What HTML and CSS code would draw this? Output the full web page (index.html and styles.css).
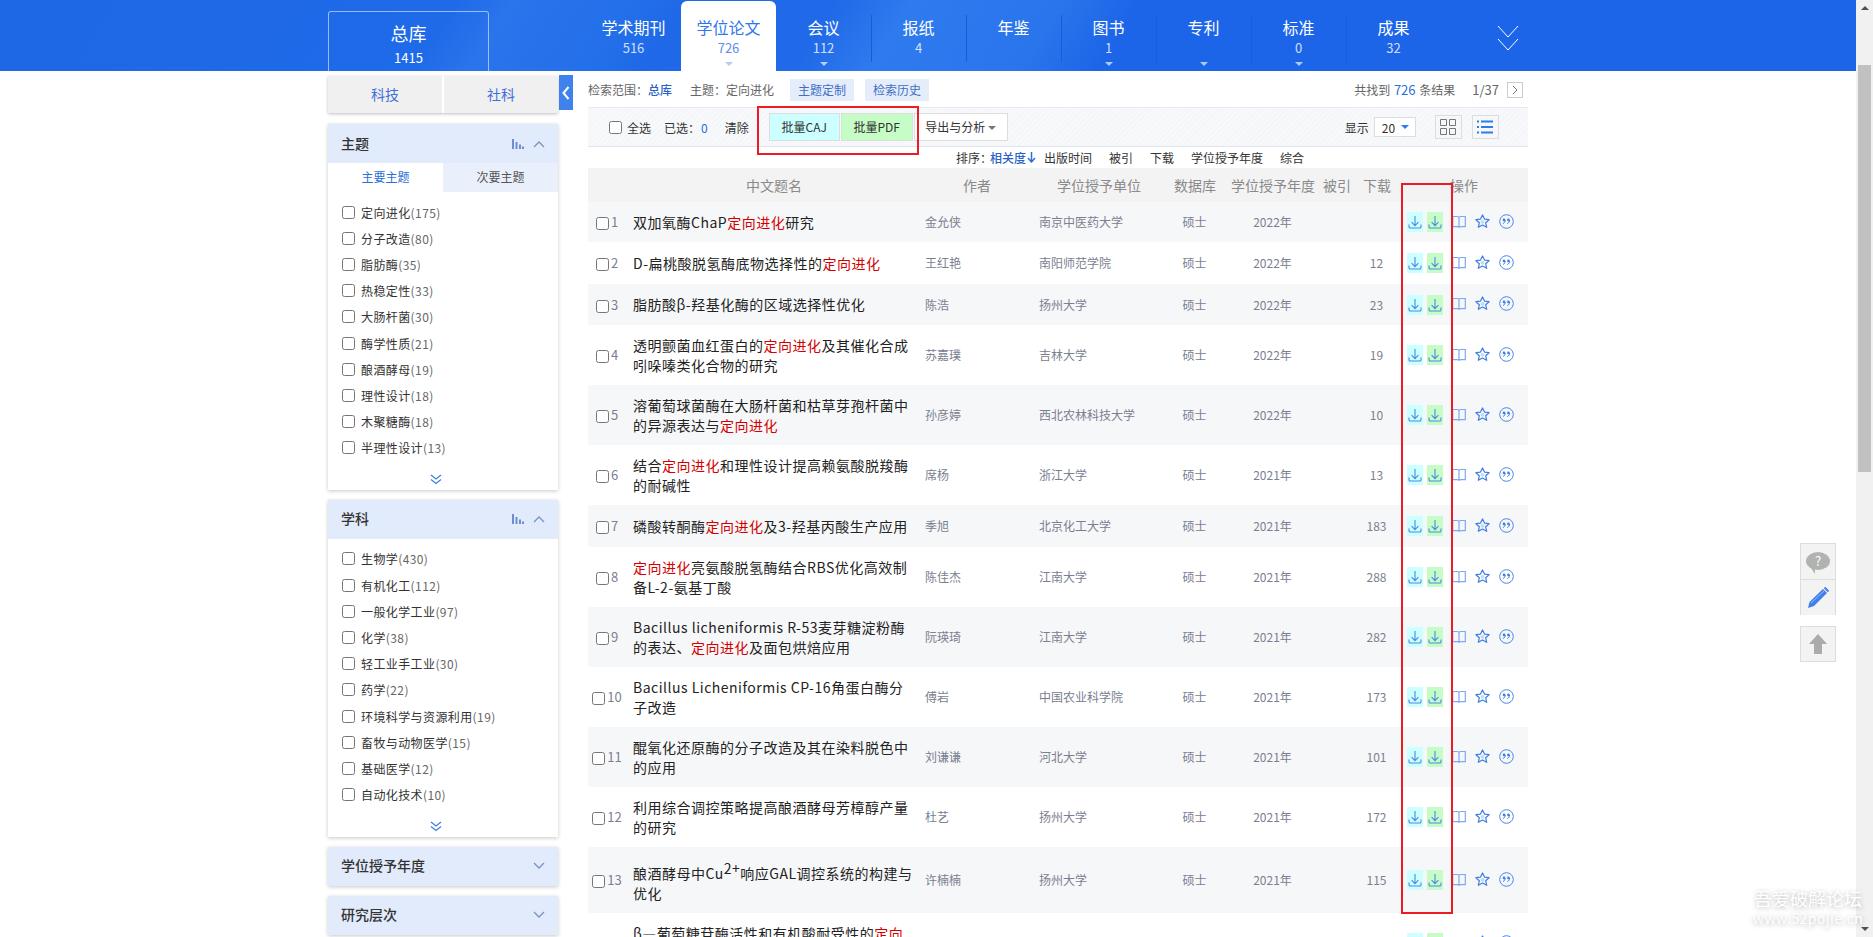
FILE: index.html
```html
<!DOCTYPE html>
<html lang="zh-CN">
<head>
    <meta charset="UTF-8">
    <title>定向进化 - 学位论文检索</title>
    <link rel="stylesheet" href="styles.css">
</head>
<body>
<svg class="defs" width="0" height="0">
    <symbol id="i-down" viewBox="0 0 16 20"><path d="M8 4v9.5M4.6 10.2L8 13.6l3.4-3.4M2 12.5v2.2c0 .8.5 1.3 1.3 1.3h9.4c.8 0 1.3-.5 1.3-1.3v-2.2" fill="none" stroke="#4a8ae6" stroke-width="1.1"/></symbol>
    <symbol id="i-book" viewBox="0 0 14 14"><path d="M.7 1.5h4.6c.9 0 1.7.5 1.7 1.3v10c0-.7-.8-1.1-1.7-1.1H.7zM13.3 1.5H8.7C7.8 1.5 7 2 7 2.8v10c0-.7.8-1.1 1.7-1.1h4.6z" fill="none" stroke="#7ea8ee" stroke-width="1.2"/></symbol>
    <symbol id="i-star" viewBox="0 0 15 15"><path d="M7.5 1l2 4.100 4.600.6-3.400 3.100 1 4.500-4.200-2.300-4.200 2.300 1-4.500L.9 5.700l4.600-.6z" fill="none" stroke="#3f7fe0" stroke-width="1.200" stroke-linejoin="round"/><circle cx="7.500" cy="7.800" r="1.900" fill="#c4d8f6"/></symbol>
    <symbol id="i-quote" viewBox="0 0 15 15"><circle cx="7.500" cy="7.500" r="6.800" fill="none" stroke="#4a86e6" stroke-width="1"/><circle cx="5" cy="5.900" r="1.300" fill="#3f7fe0"/><circle cx="9.400" cy="5.900" r="1.300" fill="#3f7fe0"/><path d="M6.200 6c0 1.700-.9 3-2.300 3.600M10.600 6c0 1.700-.9 3-2.300 3.600" fill="none" stroke="#3f7fe0" stroke-width="1"/></symbol>
    <symbol id="i-bars" viewBox="0 0 12 10"><path d="M0 0h2v10H0zM3.500 3h2v7h-2zM7 5.500h2V10H7zM10 7.500h2V10h-2z" fill="#6f8fcc"/></symbol>
    <symbol id="i-up" viewBox="0 0 12 8"><path d="M1 7l5-5 5 5" fill="none" stroke="#7b93bd" stroke-width="1.300"/></symbol>
    <symbol id="i-dn" viewBox="0 0 12 8"><path d="M1 1l5 5 5-5" fill="none" stroke="#7b93bd" stroke-width="1.300"/></symbol>
    <symbol id="i-more" viewBox="0 0 12 11"><path d="M1 1l5 4 5-4M1 5.500l5 4 5-4" fill="none" stroke="#3f7fe0" stroke-width="1.300"/></symbol>
</svg>

<div class="app">
    <div class="page">
        <!-- top database tabs -->
        <div class="topbar">
            <div class="topbar-inner">
                <div class="lib">
                    <div class="lib-name">总库</div>
                    <div class="lib-count">1415</div>
                </div>
                <div class="tabs">
                    <div class="tab"><div class="tab-name">学术期刊</div><div class="tab-count">516</div></div>
                    <div class="tab active"><div class="tab-name">学位论文</div><div class="tab-count">726</div><i class="tri"></i></div>
                    <div class="tab"><div class="tab-name">会议</div><div class="tab-count">112</div><i class="tri"></i></div>
                    <div class="tab sep"><div class="tab-name">报纸</div><div class="tab-count">4</div></div>
                    <div class="tab sep"><div class="tab-name">年鉴</div></div>
                    <div class="tab sep"><div class="tab-name">图书</div><div class="tab-count">1</div><i class="tri"></i></div>
                    <div class="tab sep"><div class="tab-name">专利</div><i class="tri"></i></div>
                    <div class="tab sep"><div class="tab-name">标准</div><div class="tab-count">0</div><i class="tri"></i></div>
                    <div class="tab sep"><div class="tab-name">成果</div><div class="tab-count">32</div></div>
                </div>
                <svg class="tabs-more" width="22" height="26" viewBox="0 0 22 26"><path d="M1 1l10 11L21 1M1 14l10 11 10-11" fill="none" stroke="#fff" stroke-width="1"/></svg>
            </div>
        </div>

        <div class="shell">
            <!-- left filters -->
            <div class="sidebar">
                <div class="field-tabs">
                    <div class="field-tab">科技</div>
                    <div class="field-tab">社科</div>
                </div>

                <div class="panel">
                    <div class="panel-head">
                        <span class="panel-name">主题</span>
                        <span class="panel-icons">
                            <svg width="12" height="10"><use href="#i-bars"/></svg>
                            <svg width="12" height="8"><use href="#i-up"/></svg>
                        </span>
                    </div>
                    <div class="panel-tabs">
                        <div class="panel-tab on">主要主题</div>
                        <div class="panel-tab">次要主题</div>
                    </div>
                    <div class="facet">
                        <label><input type="checkbox">定向进化<em>(175)</em></label>
                        <label><input type="checkbox">分子改造<em>(80)</em></label>
                        <label><input type="checkbox">脂肪酶<em>(35)</em></label>
                        <label><input type="checkbox">热稳定性<em>(33)</em></label>
                        <label><input type="checkbox">大肠杆菌<em>(30)</em></label>
                        <label><input type="checkbox">酶学性质<em>(21)</em></label>
                        <label><input type="checkbox">酿酒酵母<em>(19)</em></label>
                        <label><input type="checkbox">理性设计<em>(18)</em></label>
                        <label><input type="checkbox">木聚糖酶<em>(18)</em></label>
                        <label><input type="checkbox">半理性设计<em>(13)</em></label>
                    </div>
                    <div class="facet-more"><svg width="12" height="11"><use href="#i-more"/></svg></div>
                </div>

                <div class="panel">
                    <div class="panel-head">
                        <span class="panel-name">学科</span>
                        <span class="panel-icons">
                            <svg width="12" height="10"><use href="#i-bars"/></svg>
                            <svg width="12" height="8"><use href="#i-up"/></svg>
                        </span>
                    </div>
                    <div class="facet">
                        <label><input type="checkbox">生物学<em>(430)</em></label>
                        <label><input type="checkbox">有机化工<em>(112)</em></label>
                        <label><input type="checkbox">一般化学工业<em>(97)</em></label>
                        <label><input type="checkbox">化学<em>(38)</em></label>
                        <label><input type="checkbox">轻工业手工业<em>(30)</em></label>
                        <label><input type="checkbox">药学<em>(22)</em></label>
                        <label><input type="checkbox">环境科学与资源利用<em>(19)</em></label>
                        <label><input type="checkbox">畜牧与动物医学<em>(15)</em></label>
                        <label><input type="checkbox">基础医学<em>(12)</em></label>
                        <label><input type="checkbox">自动化技术<em>(10)</em></label>
                    </div>
                    <div class="facet-more"><svg width="12" height="11"><use href="#i-more"/></svg></div>
                </div>

                <div class="panel">
                    <div class="panel-head">
                        <span class="panel-name">学位授予年度</span>
                        <span class="panel-icons"><svg width="12" height="8"><use href="#i-dn"/></svg></span>
                    </div>
                </div>
                <div class="panel">
                    <div class="panel-head">
                        <span class="panel-name">研究层次</span>
                        <span class="panel-icons"><svg width="12" height="8"><use href="#i-dn"/></svg></span>
                    </div>
                </div>
            </div>

            <div class="collapse-btn">
                <svg width="8" height="14" viewBox="0 0 8 14"><path d="M6.500 1L1.500 7l5 6" fill="none" stroke="#fff" stroke-width="2"/></svg>
            </div>

            <!-- results -->
            <div class="main">
                <div class="info-row">
                    <span class="muted">检索范围：</span><a class="scope">总库</a>
                    <span class="topic">主题：定向进化</span>
                    <a class="chip first">主题定制</a>
                    <a class="chip">检索历史</a>
                    <span class="found">共找到 <b>726</b> 条结果</span>
                    <span class="pager">1/37</span>
                    <span class="next">
                        <svg width="6" height="10" viewBox="0 0 6 10"><path d="M1 1l4 4-4 4" fill="none" stroke="#777" stroke-width="1"/></svg>
                    </span>
                </div>

                <div class="toolbar">
                    <label class="select-all"><input type="checkbox">全选</label>
                    <span class="picked">已选：<b>0</b></span>
                    <a class="clear">清除</a>
                    <div class="batch">
                        <a class="batch-btn caj">批量CAJ</a>
                        <a class="batch-btn pdf">批量PDF</a>
                        <a class="batch-btn export">导出与分析<i class="tri-dark"></i></a>
                    </div>
                    <span class="show-label">显示</span>
                    <span class="page-size">20<i class="tri-blue"></i></span>
                    <span class="view-btn first">
                        <svg width="16" height="16" viewBox="0 0 16 16"><path d="M.5.500h6v6h-6zM9.500.500h6v6h-6zM.5 9.500h6v6h-6zM9.500 9.500h6v6h-6z" fill="none" stroke="#777" stroke-width="1"/></svg>
                    </span>
                    <span class="view-btn">
                        <svg width="16" height="14" viewBox="0 0 16 14"><path d="M4 1.500h12M4 7h12M4 12.500h12M0 1.500h2M0 7h2M0 12.500h2" fill="none" stroke="#2f7be8" stroke-width="2"/></svg>
                    </span>
                </div>

                <div class="sort-row">
                    <span class="sort-label">排序：</span>
                    <a class="sort-on">相关度<svg width="9" height="11" viewBox="0 0 9 11"><path d="M4.500 0v9M1 6l3.500 4L8 6" fill="none" stroke="#2f6fd8" stroke-width="1.500"/></svg></a>
                    <a>出版时间</a>
                    <a>被引</a>
                    <a>下载</a>
                    <a>学位授予年度</a>
                    <a>综合</a>
                </div>

                <table class="results">
                    <colgroup>
                        <col class="c-no"><col class="c-title"><col class="c-author"><col class="c-unit">
                        <col class="c-db"><col class="c-year"><col class="c-cite"><col class="c-dl"><col class="c-ops">
                    </colgroup>
                    <thead>
                        <tr>
                            <th></th><th>中文题名</th><th>作者</th><th>学位授予单位</th><th>数据库</th>
                            <th>学位授予年度</th><th>被引</th><th>下载</th><th>操作</th>
                        </tr>
                    </thead>
                    <tbody>
                        <tr class="h40">
                            <td class="no"><input type="checkbox">1</td>
                            <td class="title">双加氧酶ChaP<mark>定向进化</mark>研究</td>
                            <td>金允侠</td><td>南京中医药大学</td><td class="mid">硕士</td><td class="mid">2022年</td><td></td><td class="mid"></td>
                            <td><div class="ops"><a class="dl caj"><svg width="16" height="20"><use href="#i-down"/></svg></a><a class="dl pdf"><svg width="16" height="20"><use href="#i-down"/></svg></a><svg class="op-book" width="14" height="14"><use href="#i-book"/></svg><svg class="op" width="15" height="15"><use href="#i-star"/></svg><svg class="op" width="15" height="15"><use href="#i-quote"/></svg></div></td>
                        </tr>
                        <tr class="h42">
                            <td class="no"><input type="checkbox">2</td>
                            <td class="title">D-扁桃酸脱氢酶底物选择性的<mark>定向进化</mark></td>
                            <td>王红艳</td><td>南阳师范学院</td><td class="mid">硕士</td><td class="mid">2022年</td><td></td><td class="mid">12</td>
                            <td><div class="ops"><a class="dl caj"><svg width="16" height="20"><use href="#i-down"/></svg></a><a class="dl pdf"><svg width="16" height="20"><use href="#i-down"/></svg></a><svg class="op-book" width="14" height="14"><use href="#i-book"/></svg><svg class="op" width="15" height="15"><use href="#i-star"/></svg><svg class="op" width="15" height="15"><use href="#i-quote"/></svg></div></td>
                        </tr>
                        <tr class="h41">
                            <td class="no"><input type="checkbox">3</td>
                            <td class="title">脂肪酸β-羟基化酶的区域选择性优化</td>
                            <td>陈浩</td><td>扬州大学</td><td class="mid">硕士</td><td class="mid">2022年</td><td></td><td class="mid">23</td>
                            <td><div class="ops"><a class="dl caj"><svg width="16" height="20"><use href="#i-down"/></svg></a><a class="dl pdf"><svg width="16" height="20"><use href="#i-down"/></svg></a><svg class="op-book" width="14" height="14"><use href="#i-book"/></svg><svg class="op" width="15" height="15"><use href="#i-star"/></svg><svg class="op" width="15" height="15"><use href="#i-quote"/></svg></div></td>
                        </tr>
                        <tr class="h60">
                            <td class="no"><input type="checkbox">4</td>
                            <td class="title">透明颤菌血红蛋白的<mark>定向进化</mark>及其催化合成吲哚嗪类化合物的研究</td>
                            <td>苏嘉璞</td><td>吉林大学</td><td class="mid">硕士</td><td class="mid">2022年</td><td></td><td class="mid">19</td>
                            <td><div class="ops"><a class="dl caj"><svg width="16" height="20"><use href="#i-down"/></svg></a><a class="dl pdf"><svg width="16" height="20"><use href="#i-down"/></svg></a><svg class="op-book" width="14" height="14"><use href="#i-book"/></svg><svg class="op" width="15" height="15"><use href="#i-star"/></svg><svg class="op" width="15" height="15"><use href="#i-quote"/></svg></div></td>
                        </tr>
                        <tr class="h60">
                            <td class="no"><input type="checkbox">5</td>
                            <td class="title">溶葡萄球菌酶在大肠杆菌和枯草芽孢杆菌中的异源表达与<mark>定向进化</mark></td>
                            <td>孙彦婷</td><td>西北农林科技大学</td><td class="mid">硕士</td><td class="mid">2022年</td><td></td><td class="mid">10</td>
                            <td><div class="ops"><a class="dl caj"><svg width="16" height="20"><use href="#i-down"/></svg></a><a class="dl pdf"><svg width="16" height="20"><use href="#i-down"/></svg></a><svg class="op-book" width="14" height="14"><use href="#i-book"/></svg><svg class="op" width="15" height="15"><use href="#i-star"/></svg><svg class="op" width="15" height="15"><use href="#i-quote"/></svg></div></td>
                        </tr>
                        <tr class="h60">
                            <td class="no"><input type="checkbox">6</td>
                            <td class="title">结合<mark>定向进化</mark>和理性设计提高赖氨酸脱羧酶的耐碱性</td>
                            <td>席杨</td><td>浙江大学</td><td class="mid">硕士</td><td class="mid">2021年</td><td></td><td class="mid">13</td>
                            <td><div class="ops"><a class="dl caj"><svg width="16" height="20"><use href="#i-down"/></svg></a><a class="dl pdf"><svg width="16" height="20"><use href="#i-down"/></svg></a><svg class="op-book" width="14" height="14"><use href="#i-book"/></svg><svg class="op" width="15" height="15"><use href="#i-star"/></svg><svg class="op" width="15" height="15"><use href="#i-quote"/></svg></div></td>
                        </tr>
                        <tr class="h42">
                            <td class="no"><input type="checkbox">7</td>
                            <td class="title">磷酸转酮酶<mark>定向进化</mark>及3-羟基丙酸生产应用</td>
                            <td>季旭</td><td>北京化工大学</td><td class="mid">硕士</td><td class="mid">2021年</td><td></td><td class="mid">183</td>
                            <td><div class="ops"><a class="dl caj"><svg width="16" height="20"><use href="#i-down"/></svg></a><a class="dl pdf"><svg width="16" height="20"><use href="#i-down"/></svg></a><svg class="op-book" width="14" height="14"><use href="#i-book"/></svg><svg class="op" width="15" height="15"><use href="#i-star"/></svg><svg class="op" width="15" height="15"><use href="#i-quote"/></svg></div></td>
                        </tr>
                        <tr class="h60">
                            <td class="no"><input type="checkbox">8</td>
                            <td class="title"><mark>定向进化</mark>亮氨酸脱氢酶结合RBS优化高效制备L-2-氨基丁酸</td>
                            <td>陈佳杰</td><td>江南大学</td><td class="mid">硕士</td><td class="mid">2021年</td><td></td><td class="mid">288</td>
                            <td><div class="ops"><a class="dl caj"><svg width="16" height="20"><use href="#i-down"/></svg></a><a class="dl pdf"><svg width="16" height="20"><use href="#i-down"/></svg></a><svg class="op-book" width="14" height="14"><use href="#i-book"/></svg><svg class="op" width="15" height="15"><use href="#i-star"/></svg><svg class="op" width="15" height="15"><use href="#i-quote"/></svg></div></td>
                        </tr>
                        <tr class="h60">
                            <td class="no"><input type="checkbox">9</td>
                            <td class="title">Bacillus licheniformis R-53麦芽糖淀粉酶的表达、<mark>定向进化</mark>及面包烘焙应用</td>
                            <td>阮瑛琦</td><td>江南大学</td><td class="mid">硕士</td><td class="mid">2021年</td><td></td><td class="mid">282</td>
                            <td><div class="ops"><a class="dl caj"><svg width="16" height="20"><use href="#i-down"/></svg></a><a class="dl pdf"><svg width="16" height="20"><use href="#i-down"/></svg></a><svg class="op-book" width="14" height="14"><use href="#i-book"/></svg><svg class="op" width="15" height="15"><use href="#i-star"/></svg><svg class="op" width="15" height="15"><use href="#i-quote"/></svg></div></td>
                        </tr>
                        <tr class="h60">
                            <td class="no"><input type="checkbox">10</td>
                            <td class="title">Bacillus Licheniformis CP-16角蛋白酶分子改造</td>
                            <td>傅岩</td><td>中国农业科学院</td><td class="mid">硕士</td><td class="mid">2021年</td><td></td><td class="mid">173</td>
                            <td><div class="ops"><a class="dl caj"><svg width="16" height="20"><use href="#i-down"/></svg></a><a class="dl pdf"><svg width="16" height="20"><use href="#i-down"/></svg></a><svg class="op-book" width="14" height="14"><use href="#i-book"/></svg><svg class="op" width="15" height="15"><use href="#i-star"/></svg><svg class="op" width="15" height="15"><use href="#i-quote"/></svg></div></td>
                        </tr>
                        <tr class="h60">
                            <td class="no"><input type="checkbox">11</td>
                            <td class="title">醌氧化还原酶的分子改造及其在染料脱色中的应用</td>
                            <td>刘谦谦</td><td>河北大学</td><td class="mid">硕士</td><td class="mid">2021年</td><td></td><td class="mid">101</td>
                            <td><div class="ops"><a class="dl caj"><svg width="16" height="20"><use href="#i-down"/></svg></a><a class="dl pdf"><svg width="16" height="20"><use href="#i-down"/></svg></a><svg class="op-book" width="14" height="14"><use href="#i-book"/></svg><svg class="op" width="15" height="15"><use href="#i-star"/></svg><svg class="op" width="15" height="15"><use href="#i-quote"/></svg></div></td>
                        </tr>
                        <tr class="h60">
                            <td class="no"><input type="checkbox">12</td>
                            <td class="title">利用综合调控策略提高酿酒酵母芳樟醇产量的研究</td>
                            <td>杜艺</td><td>扬州大学</td><td class="mid">硕士</td><td class="mid">2021年</td><td></td><td class="mid">172</td>
                            <td><div class="ops"><a class="dl caj"><svg width="16" height="20"><use href="#i-down"/></svg></a><a class="dl pdf"><svg width="16" height="20"><use href="#i-down"/></svg></a><svg class="op-book" width="14" height="14"><use href="#i-book"/></svg><svg class="op" width="15" height="15"><use href="#i-star"/></svg><svg class="op" width="15" height="15"><use href="#i-quote"/></svg></div></td>
                        </tr>
                        <tr class="h66">
                            <td class="no"><input type="checkbox">13</td>
                            <td class="title title-sup">酿酒酵母中Cu<sup>2+</sup>响应GAL调控系统的构建与优化</td>
                            <td>许楠楠</td><td>扬州大学</td><td class="mid">硕士</td><td class="mid">2021年</td><td></td><td class="mid">115</td>
                            <td><div class="ops"><a class="dl caj"><svg width="16" height="20"><use href="#i-down"/></svg></a><a class="dl pdf"><svg width="16" height="20"><use href="#i-down"/></svg></a><svg class="op-book" width="14" height="14"><use href="#i-book"/></svg><svg class="op" width="15" height="15"><use href="#i-star"/></svg><svg class="op" width="15" height="15"><use href="#i-quote"/></svg></div></td>
                        </tr>
                        <tr class="h60">
                            <td class="no"><input type="checkbox">14</td>
                            <td class="title">β—葡萄糖苷酶活性和有机酸耐受性的<mark>定向进化</mark></td>
                            <td></td><td></td><td class="mid"></td><td class="mid"></td><td></td><td class="mid"></td>
                            <td><div class="ops"><a class="dl caj"><svg width="16" height="20"><use href="#i-down"/></svg></a><a class="dl pdf"><svg width="16" height="20"><use href="#i-down"/></svg></a><svg class="op-book" width="14" height="14"><use href="#i-book"/></svg><svg class="op" width="15" height="15"><use href="#i-star"/></svg><svg class="op" width="15" height="15"><use href="#i-quote"/></svg></div></td>
                        </tr>
                    </tbody>
                </table>
            </div>

            <!-- red marks drawn over the screenshot -->
            <div class="mark-batch"></div>
            <div class="mark-column"></div>
        </div>

        <div class="float-tools">
            <div class="tool">
                <span class="bubble">?</span>
            </div>
            <div class="tool">
                <svg width="24" height="24" viewBox="0 0 24 24"><path d="M2 22l1.500-6L17 3l4 4L8 20z" fill="#3f7fe8"/><path d="M18.500 1.500l4 4" stroke="#3f7fe8" stroke-width="2"/><path d="M5 17L18 5" stroke="#9dbdf5" stroke-width="1"/></svg>
            </div>
            <div class="tool tool-up">
                <svg width="20" height="22" viewBox="0 0 20 22"><path d="M10 1l9 10h-5v10H6V11H1z" fill="#a9aca9"/></svg>
            </div>
        </div>
    </div>

    <div class="scrollbar">
        <i class="arrow-up"></i>
        <div class="thumb"></div>
        <i class="arrow-down"></i>
    </div>

    <div class="watermark">
        <div class="wm-name">吾爱破解论坛</div>
        <div class="wm-url">www.52pojie.cn</div>
    </div>
</div>
</body>
</html>
```

FILE: styles.css
```css
* {
    box-sizing: border-box;
}

html, body {
    margin: 0;
    padding: 0;
    height: 100%;
    overflow: hidden;
}

body {
    font-family: "Noto Sans CJK SC", "Noto Sans", sans-serif;
    font-size: 12px;
    color: #333;
    background: #fff;
}

a {
    color: inherit;
    text-decoration: none;
}

input[type="checkbox"] {
    width: 13px;
    height: 13px;
    margin: 0;
    flex: none;
}

.defs {
    position: absolute;
}

.app {
    position: relative;
    display: flex;
    height: 937px;
    overflow: hidden;
}

.page {
    position: relative;
    flex: 1;
    min-width: 0;
    overflow: hidden;
}

/* top bar */
.topbar {
    height: 71px;
    background: linear-gradient(122deg, #1e68e6 0, #1f6ae8 24%, #2a74ec 27%, #2470ea 33%, #1f69e8 36%, #2069e8 44%, #2f7aee 48%, #2a75ec 56%, #1c65e8 60%, #1c65e8 100%);
}

.topbar-inner {
    position: relative;
    display: flex;
    width: 1200px;
    height: 71px;
    margin: 0 auto;
}

.lib {
    width: 161px;
    height: 60px;
    margin-top: 11px;
    border: 1px solid rgba(255, 255, 255, 0.55);
    border-bottom: 0;
    border-radius: 3px 3px 0 0;
    color: #fff;
    text-align: center;
}

.lib-name {
    margin-top: 8px;
    font-size: 18px;
    line-height: 26px;
}

.lib-count {
    margin-top: 4px;
    font-size: 13px;
    line-height: 16px;
}

.tabs {
    display: flex;
    margin-left: 97px;
}

.tab {
    position: relative;
    width: 95px;
    padding-top: 15px;
    color: #fff;
    text-align: center;
}

.tab-name {
    font-size: 16px;
    line-height: 24px;
}

.tab-count {
    margin-top: 1px;
    font-size: 13px;
    line-height: 16px;
    color: rgba(255, 255, 255, 0.8);
}

.tab.sep::before {
    content: "";
    position: absolute;
    left: 0;
    top: 15px;
    height: 47px;
    border-left: 1px solid #1a5cd6;
}

.tab.active {
    margin-top: 1px;
    padding-top: 14px;
    background: #fff;
    border-radius: 6px 6px 0 0;
    color: #2f78ea;
}

.tab.active .tab-count {
    color: #5b8fe6;
}

.tri {
    position: absolute;
    left: 50%;
    bottom: 5px;
    margin-left: -4px;
    border: 4px solid transparent;
    border-bottom: 0;
    border-top-color: rgba(255, 255, 255, 0.65);
}

.tab.active .tri {
    border-top-color: #b4cdf5;
}

.tabs-more {
    margin: 25px 0 0 56px;
}

/* page body */
.shell {
    position: relative;
    display: flex;
    align-items: flex-start;
    width: 1200px;
    margin: 0 auto;
}

.sidebar {
    width: 230px;
    flex: none;
    padding-top: 5px;
}

.field-tabs {
    display: flex;
    gap: 2px;
    height: 37px;
    margin-bottom: 11px;
    box-shadow: 0 1px 3px rgba(0, 0, 0, 0.25);
}

.field-tab {
    flex: 1;
    background: #f0f0f0;
    color: #3f6fd8;
    font-size: 14px;
    line-height: 37px;
    text-align: center;
}

.panel {
    margin-bottom: 10px;
    background: #fff;
    box-shadow: 0 1px 4px rgba(0, 0, 0, 0.22);
}

.panel-head {
    display: flex;
    align-items: center;
    justify-content: space-between;
    height: 39px;
    padding: 0 13px;
    background: #e2ebfb;
    color: #333;
    font-size: 14px;
    font-weight: 500;
}

.panel-name {
    margin-top: -2px;
}

.panel-icons {
    display: flex;
    align-items: center;
    gap: 9px;
}

.panel-tabs {
    display: flex;
    height: 29px;
    line-height: 27px;
    text-align: center;
}

.panel-tab {
    flex: 1;
    background: #eaf0fb;
    color: #555;
}

.panel-tab.on {
    background: #fff;
    color: #2a6fd8;
}

.facet {
    padding-top: 7px;
}

.facet label {
    display: flex;
    align-items: center;
    height: 26.2px;
    padding-left: 14px;
    color: #333;
    font-size: 12px;
    letter-spacing: 0.4px;
}

.facet input {
    margin-right: 6px;
}

.facet em {
    color: #666;
    font-style: normal;
}

.facet-more {
    display: flex;
    justify-content: center;
    height: 29px;
    padding-top: 13px;
    padding-right: 15px;
}

.collapse-btn {
    position: absolute;
    left: 231px;
    top: 4px;
    display: flex;
    align-items: center;
    justify-content: center;
    width: 14px;
    height: 35px;
    background: #3f82ee;
}

/* results */
.main {
    width: 940px;
    margin-left: 30px;
    padding-top: 8px;
}

.info-row {
    display: flex;
    align-items: center;
    height: 22px;
    font-size: 12px;
    line-height: 22px;
    color: #666;
}

.scope {
    color: #2a62c8;
    font-weight: 500;
}

.topic {
    margin-left: 18px;
}

.chip {
    width: 64px;
    height: 22px;
    margin-left: 11px;
    background: #e5edfb;
    color: #3f6fc5;
    text-align: center;
}

.chip.first {
    margin-left: 16px;
}

.found {
    margin-left: auto;
    word-spacing: 1px;
}

.found b {
    color: #2a6fd8;
    font-size: 13px;
    font-weight: 400;
}

.pager {
    margin-left: 17px;
    font-size: 13px;
}

.next {
    display: flex;
    align-items: center;
    justify-content: center;
    width: 16px;
    height: 16px;
    margin: 0 5px 0 8px;
    border: 1px solid #ccc;
}

.toolbar {
    display: flex;
    align-items: center;
    height: 40px;
    margin-top: 6px;
    padding-left: 21px;
    background: repeating-linear-gradient(135deg, #f7f9fb 0, #f7f9fb 2px, #f4f6f9 2px, #f4f6f9 4px);
    border-top: 1px solid #e6e9ef;
    border-bottom: 1px solid #e0e4ec;
}

.select-all {
    display: flex;
    align-items: center;
    gap: 5px;
}

.picked {
    margin-left: 13px;
}

.picked b {
    margin-left: 1px;
    color: #2a6fd8;
    font-weight: 400;
}

.clear {
    margin-left: 17px;
}

.batch {
    display: flex;
    height: 28px;
    margin-left: 20px;
}

.batch-btn {
    height: 28px;
    margin-right: 1px;
    border: 1px solid #ddd;
    line-height: 26px;
    text-align: center;
}

.batch-btn.caj {
    width: 71px;
    background: #ccffff;
}

.batch-btn.pdf {
    width: 72px;
    background: #c6fdc6;
}

.batch-btn.export {
    width: 94px;
    margin-right: 0;
    background: #fff;
}

.tri-dark {
    display: inline-block;
    margin-left: 3px;
    vertical-align: 2px;
    border: 4px solid transparent;
    border-bottom: 0;
    border-top-color: #777;
}

.show-label {
    margin-left: 337px;
}

.page-size {
    display: flex;
    align-items: center;
    justify-content: space-between;
    width: 42px;
    height: 20px;
    margin-left: 5px;
    padding: 0 6px 0 7px;
    background: #fff;
    border: 1px solid #ddd;
}

.tri-blue {
    border: 4px solid transparent;
    border-bottom: 0;
    border-top-color: #2f7be8;
}

.view-btn {
    display: flex;
    align-items: center;
    justify-content: center;
    width: 27px;
    height: 24px;
    margin-left: 10px;
    border: 1px solid #ddd;
}

.view-btn.first {
    margin-left: 19px;
}

.sort-row {
    display: flex;
    align-items: center;
    gap: 17px;
    height: 21px;
    padding-left: 368px;
    color: #333;
    font-size: 12px;
    white-space: nowrap;
}

.sort-label {
    margin-right: -17px;
    width: 34px;
}

.sort-on {
    display: flex;
    align-items: center;
    margin-right: -9px;
    color: #2a62c8;
    font-weight: 500;
}

.sort-on svg {
    margin-left: 1px;
}

.results {
    width: 940px;
    border-collapse: collapse;
    table-layout: fixed;
}

.c-no { width: 40px; }
.c-title { width: 292px; }
.c-author { width: 114px; }
.c-unit { width: 130px; }
.c-db { width: 62px; }
.c-year { width: 94px; }
.c-cite { width: 34px; }
.c-dl { width: 46px; }
.c-ops { width: 128px; }

.results th {
    height: 34px;
    padding: 0;
    background: #f3f3f4;
    color: #8a8a8a;
    font-size: 14px;
    font-weight: 400;
    text-align: center;
    white-space: nowrap;
}

.results td {
    padding: 0 5px;
    color: #7a8090;
    font-size: 12px;
    line-height: 20px;
}

.results tbody tr:nth-child(odd) {
    background: #f6f7f9;
}

.h40 { height: 40px; }
.h41 { height: 41px; }
.h42 { height: 42px; }
.h60 { height: 60px; }
.h66 { height: 66px; }

.results td.no {
    padding: 0;
    padding-right: 2px;
    font-size: 13px;
    text-align: center;
}

.no input {
    margin-right: 2px;
    vertical-align: -3px;
}

.results td.title {
    padding-right: 4px;
    padding-bottom: 1px;
    color: #222;
    font-size: 14px;
    letter-spacing: 0.5px;
}

mark {
    background: none;
    color: #d40000;
}

.results td.mid {
    padding: 0;
    padding-right: 1px;
    text-align: center;
}

sup {
    font-size: 14px;
    line-height: 0;
    vertical-align: 5px;
}

.results td.title-sup {
    padding-top: 6px;
}

.ops {
    display: flex;
    align-items: center;
    padding-left: 2px;
}

.dl {
    display: flex;
    width: 16px;
    height: 20px;
    margin-right: 4px;
}

.dl.caj {
    background: #ccffff;
}

.dl.pdf {
    margin-right: 0;
    background: #c6fdc6;
}

.op-book {
    margin: -1px 0 0 9px;
}

.op {
    margin: -2px 0 0 9px;
}

/* red annotation boxes */
.mark-batch,
.mark-column {
    position: absolute;
    border: 2px solid #ed1c24;
}

.mark-batch {
    left: 429px;
    top: 35px;
    width: 162px;
    height: 49px;
}

.mark-column {
    left: 1073px;
    top: 112px;
    width: 52px;
    height: 731px;
}

/* side tools and watermark */
.float-tools {
    position: absolute;
    left: 1800px;
    top: 543px;
    width: 36px;
}

.tool {
    display: flex;
    align-items: center;
    justify-content: center;
    height: 36px;
    background: #f3f3f3;
    border: 1px solid #ddd;
    border-bottom: 0;
}

.tool-up {
    margin-top: 11px;
    border-bottom: 1px solid #ddd;
}

.bubble {
    position: relative;
    width: 24px;
    height: 18px;
    margin-top: -2px;
    border-radius: 50%;
    background: #b0b3b0;
    color: #fff;
    font-size: 13px;
    line-height: 18px;
    text-align: center;
}

.bubble::after {
    content: "";
    position: absolute;
    left: 5px;
    bottom: -4px;
    border-top: 6px solid #b0b3b0;
    border-left: 4px solid transparent;
}

.watermark {
    position: absolute;
    left: 1750px;
    top: 886px;
    width: 116px;
    color: #fff;
    text-align: center;
    text-shadow: 0 1px 5px rgba(0, 0, 0, 0.3);
    white-space: nowrap;
}

.wm-name {
    font-size: 18px;
    line-height: 24px;
}

.wm-url {
    font-size: 14px;
    letter-spacing: 0.4px;
    line-height: 16px;
}

/* window scrollbar */
.scrollbar {
    position: relative;
    width: 17px;
    flex: none;
    background: #f1f1f1;
    padding-top: 65px;
}

.thumb {
    width: 13px;
    height: 407px;
    margin-left: 2px;
    background: #c1c1c1;
}

.arrow-up,
.arrow-down {
    position: absolute;
    left: 5px;
    border: 4px solid transparent;
}

.arrow-up {
    top: 6px;
    border-top: 0;
    border-bottom-color: #505050;
}

.arrow-down {
    bottom: 6px;
    border-bottom: 0;
    border-top-color: #505050;
}
```
